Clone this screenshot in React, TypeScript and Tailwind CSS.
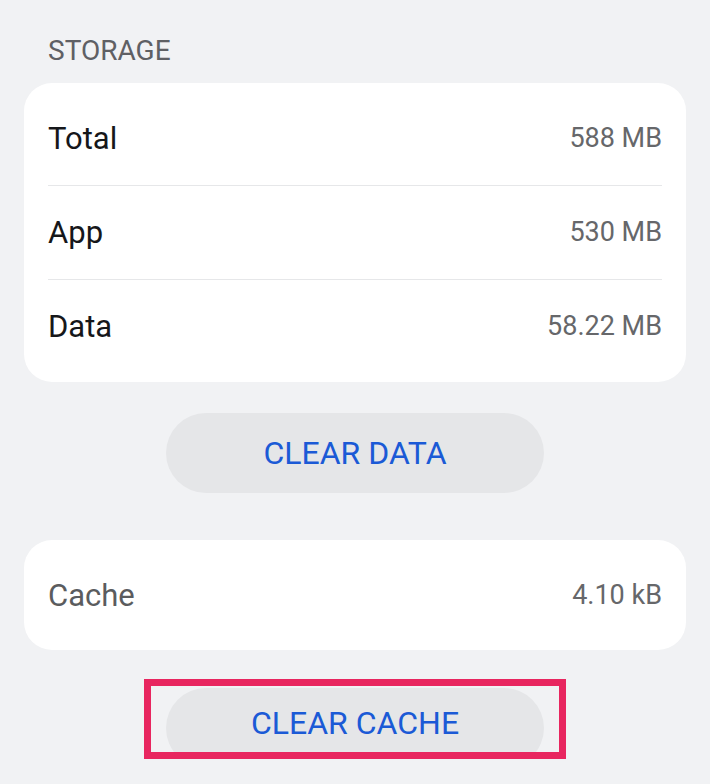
import React from 'react';

interface StorageRow {
  label: string;
  value: string;
}

const rows: StorageRow[] = [
  { label: 'Total', value: '588 MB' },
  { label: 'App', value: '530 MB' },
  { label: 'Data', value: '58.22 MB' },
];

const Row: React.FC<{ row: StorageRow; muted?: boolean }> = ({ row, muted }) => (
  <div className="flex h-[93px] items-center justify-between">
    <span className={`text-[31px] leading-none ${muted ? 'text-[#5b5c5e]' : 'text-[#16171a]'}`}>{row.label}</span>
    <span className="text-[27px] leading-none text-[#66676a]">{row.value}</span>
  </div>
);

const App: React.FC = () => {
  return (
    <div
      className="min-h-[784px] bg-[#f1f2f4] px-6 pt-[34px]"
      style={{ fontFamily: 'Roboto, "Noto Sans", sans-serif' }}
    >
      <div className="mb-[15px] pl-6 text-[28px] leading-[34px] text-[#5f6064]">STORAGE</div>

      <div className="rounded-[28px] bg-white px-6 py-[9px]">
        {rows.map((row, i) => (
          <div key={row.label}>
            {i > 0 && <div className="h-px bg-[#e6e7e9]" />}
            <Row row={row} />
          </div>
        ))}
      </div>

      <div className="mt-[31px] flex justify-center">
        <button className="h-[80px] w-[378px] rounded-full bg-[#e5e6e8] text-[32px] text-[#1b5ad6]">
          CLEAR DATA
        </button>
      </div>

      <div className="mt-[47px] flex h-[110px] items-center rounded-[28px] bg-white px-6">
        <div className="flex-1">
          <div className="flex items-center justify-between">
            <span className="text-[31px] leading-none text-[#5b5c5e]">Cache</span>
            <span className="text-[27px] leading-none text-[#66676a]">4.10 kB</span>
          </div>
        </div>
      </div>

      <div className="mt-[29px] flex justify-center">
        <div className="h-[80px] w-[422px] overflow-hidden border-[7px] border-[#e8265f] px-[15px] pt-[2px]">
          <button className="h-[80px] w-full rounded-full bg-[#e5e6e8] pb-[10px] text-[32px] text-[#1b5ad6]">
            CLEAR CACHE
          </button>
        </div>
      </div>
    </div>
  );
};

export default App;
